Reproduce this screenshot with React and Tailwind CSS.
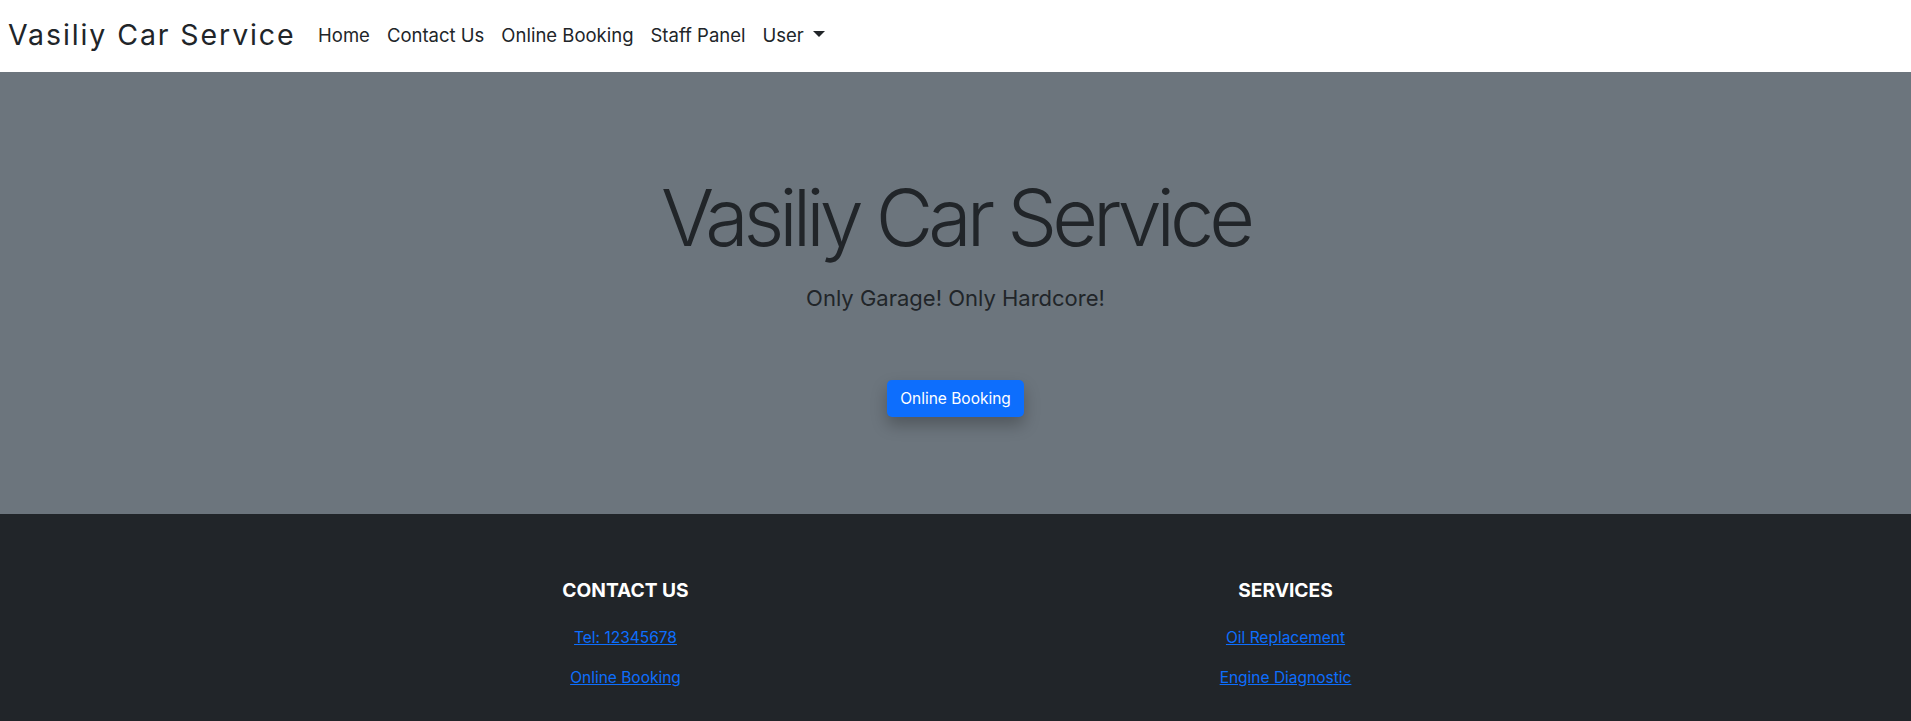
import React from "react";

export default function App() {
  return (
    <div className="w-[1911px] h-[721px] overflow-hidden flex flex-col font-[Inter,sans-serif]">
      <nav className="h-[72px] shrink-0 bg-white flex items-center pl-2 pb-[2px]">
        <a className="text-[28.5px] leading-[36px] text-[#212529] tracking-[1.9px] mr-[14px]">Vasiliy Car Service</a>
        <ul className="flex items-center">
          <li className="px-[8.5px] text-[18.5px] leading-[24px] text-[#212529]">Home</li>
          <li className="px-[8.5px] text-[18.5px] leading-[24px] text-[#212529]">Contact Us</li>
          <li className="px-[8.5px] text-[18.5px] leading-[24px] text-[#212529]">Online Booking</li>
          <li className="px-[8.5px] text-[18.5px] leading-[24px] text-[#212529]">Staff Panel</li>
          <li className="px-[8.5px] text-[18.5px] leading-[24px] text-[#212529] flex items-center">
            User
            <span className="ml-[9px] mb-[2px] w-0 h-0 border-x-[6px] border-t-[6px] border-x-transparent border-t-[#212529]"></span>
          </li>
        </ul>
      </nav>
      <section className="h-[442px] shrink-0 bg-[#6c757d] flex flex-col items-center pt-[98px]">
        <h1 className="text-[79px] leading-[1.2] font-light text-[#212529] tracking-[-5px]">Vasiliy Car Service</h1>
        <p className="mt-[17px] text-[22px] leading-[33px] text-[#212529]">Only Garage! Only Hardcore!</p>
        <button className="mt-[65px] h-[37px] px-[13px] rounded-[5px] bg-[#0d6efd] text-white text-[15.5px] shadow-[0_8px_16px_rgba(0,0,0,0.25)]">
          Online Booking
        </button>
      </section>
      <footer className="flex-1 bg-[#212529]">
        <div className="w-[1320px] mx-auto grid grid-cols-2 pt-[65px]">
          <div className="flex flex-col items-center">
            <h5 className="text-[19.2px] leading-[22px] font-bold text-white">CONTACT US</h5>
            <a className="mt-[25px] text-[15.5px] leading-[24px] text-[#0d6efd] underline">Tel: 12345678</a>
            <a className="mt-[16px] text-[15.5px] leading-[24px] text-[#0d6efd] underline">Online Booking</a>
          </div>
          <div className="flex flex-col items-center">
            <h5 className="text-[19.2px] leading-[22px] font-bold text-white">SERVICES</h5>
            <a className="mt-[25px] text-[15.5px] leading-[24px] text-[#0d6efd] underline">Oil Replacement</a>
            <a className="mt-[16px] text-[15.5px] leading-[24px] text-[#0d6efd] underline">Engine Diagnostic</a>
          </div>
        </div>
      </footer>
    </div>
  );
}
